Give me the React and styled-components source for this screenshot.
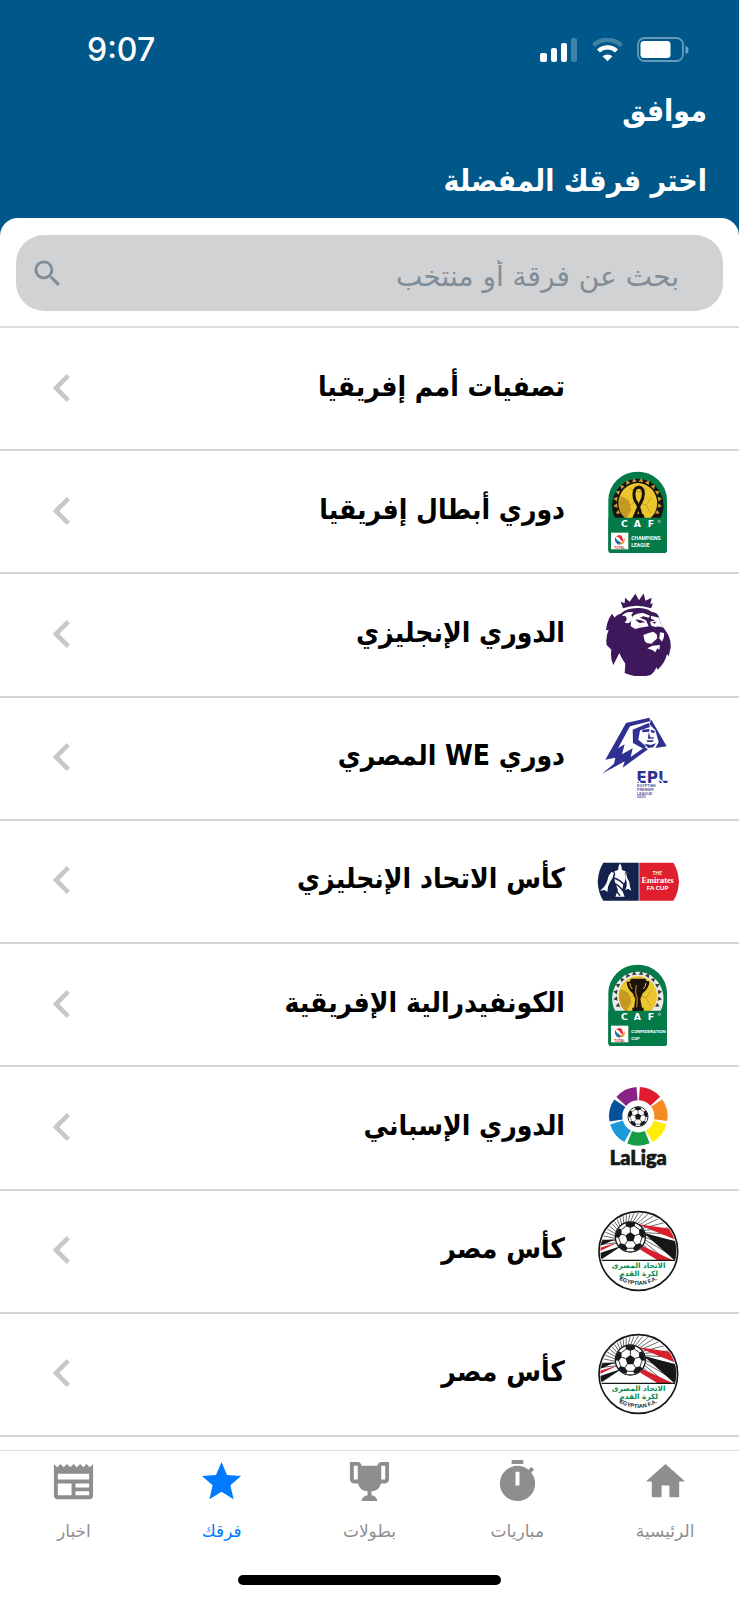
import React from "react";
import styled, { createGlobalStyle } from "styled-components";

const ARABIC = '"DejaVu Sans", "Noto Sans", sans-serif';
const ARABIC_BOLD = '"DejaVu Sans Condensed", "DejaVu Sans", "Noto Sans", sans-serif';
const LATIN = 'Inter, "Liberation Sans", sans-serif';

const GlobalStyle = createGlobalStyle`
  *, *::before, *::after { box-sizing: border-box; }
  body { margin: 0; background: #ffffff; font-family: ${ARABIC}; color: #000000; }
`;

const Screen = styled.div`
  display: flex;
  flex-direction: column;
  min-height: 100vh;
  background: #ffffff;
`;

const Header = styled.header`
  padding-bottom: 18px;
  background: #00578a;
  color: #ffffff;
`;

const StatusBar = styled.div`
  display: flex;
  justify-content: space-between;
  align-items: center;
  direction: ltr;
  height: 88px;
  padding: 12px 50px 0 87px;
`;

const Clock = styled.time`
  font: 500 32px/40px ${LATIN};
`;

const StatusIcons = styled.div`
  display: flex;
  align-items: center;
  gap: 14px;
`;

const HeaderRow = styled.div`
  display: flex;
  align-items: center;
  height: ${(p) => p.$height};
  padding: ${(p) => p.$top || "0"} 32px 0;
`;

const ConfirmButton = styled.button`
  border: 0;
  padding: 0;
  background: none;
  color: inherit;
  font: 700 30px/40px ${ARABIC_BOLD};
  cursor: pointer;
`;

const Title = styled.h1`
  margin: 0;
  font: 700 30px/40px ${ARABIC_BOLD};
`;

const SearchPanel = styled.form`
  padding: 17px 16px 15px;
  margin-top: -18px;
  border-bottom: 2px solid #dcdcde;
  border-radius: 18px 18px 0 0;
  background: #ffffff;
`;

const SearchBox = styled.label`
  display: flex;
  align-items: center;
  height: 76px;
  padding: 0 44px 0 14px;
  border-radius: 28px;
  background: #d0d2d4;
  color: #7f8d98;
`;

const SearchInput = styled.input`
  flex: 1;
  min-width: 0;
  border: 0;
  padding: 8px 0 0;
  outline: 0;
  background: none;
  color: #33414c;
  font: 400 28px/40px ${ARABIC};
  &::placeholder { color: #7f8d98; opacity: 1; }
`;

const List = styled.ul`
  display: flex;
  flex: 1;
  flex-direction: column;
  margin: 0;
  padding: 0 0 13px;
  list-style: none;
`;

const Row = styled.li`
  display: flex;
  flex: 1 0 110px;
  border-bottom: 2px solid #d6d6d8;
`;

const RowButton = styled.button`
  display: flex;
  flex: 1;
  align-items: center;
  gap: 32px;
  border: 0;
  padding: 0 60px 0 34px;
  background: none;
  color: inherit;
  font: 700 28px/40px ${ARABIC_BOLD};
  text-align: right;
  cursor: pointer;
`;

const LogoSlot = styled.span`
  flex: none;
  width: 82px;
  height: 82px;
  direction: ltr;
  svg { display: block; width: 100%; height: 100%; }
`;

const RowLabel = styled.span`
  flex: 1;
  padding-bottom: 4px;
  white-space: nowrap;
`;

const ChevronSlot = styled.span`
  display: flex;
  padding-bottom: 2px;
  color: #c8c8c9;
`;

const TabBar = styled.nav`
  display: flex;
  border-top: 1px solid #dcdcdc;
  padding: 7px 0 32px;
`;

const Tab = styled.a`
  display: flex;
  flex: 1;
  flex-direction: column;
  align-items: center;
  gap: 14px;
  color: ${(p) => (p.$active ? "#007aff" : "#8e8e8f")};
  font: 400 17px/24px ${ARABIC};
  text-decoration: none;
`;

const HomeIndicator = styled.div`
  width: 263px;
  height: 10px;
  margin: 0 auto 15px;
  border-radius: 5px;
  background: #000000;
`;

function Icon({ d, size }) {
  return (
    <svg width={size} height={size} viewBox="0 0 24 24" fill="currentColor" aria-hidden="true">
      <path d={d} />
    </svg>
  );
}

const icons = {
  search:
    "M15.5 14h-.79l-.28-.27A6.47 6.47 0 0 0 16 9.5 6.5 6.5 0 1 0 9.5 16c1.61 0 3.09-.59 4.23-1.57l.27.28v.79l5 4.99L20.49 19l-4.99-5zm-6 0C7.01 14 5 11.99 5 9.5S7.01 5 9.5 5 14 7.01 14 9.5 11.99 14 9.5 14z",
  chevron: "M15.41 7.41 14 6l-6 6 6 6 1.41-1.41L10.83 12z",
  home: "M10 20v-6h4v6h5v-8h3L12 3 2 12h3v8h5z",
  timer:
    "M19.03 7.39l1.42-1.42c-.45-.51-.9-.97-1.41-1.41L17.62 6A8.96 8.96 0 0 0 12 4a9 9 0 0 0-9 9 9 9 0 0 0 9 9c5 0 9-4 9-9 0-2.12-.74-4.07-1.97-5.61M13 14h-2V7h2v7m2-13H9v2h6V1z",
  trophy:
    "M18 2c-.9 0-2 1-2 2H8c0-1-1.1-2-2-2H2v9c0 1 1 2 2 2h2.2c.4 2 1.7 3.7 4.8 4v2.08C8 19.54 8 22 8 22h8s0-2.46-3-2.92V17c3.1-.3 4.4-2 4.8-4H20c1 0 2-1 2-2V2h-4M6 11H4V4h2v7m14 0h-2V4h2v7z",
  star: "M12 17.27 18.18 21l-1.64-7.03L22 9.24l-7.19-.62L12 2 9.19 8.62 2 9.24l5.45 4.73L5.82 21 12 17.27z",
  news:
    "M20 11H4V8h16m0 7h-7v-2h7m0 6h-7v-2h7m-9 2H4v-6h7m9.33-8.33L18.67 3 17 4.67 15.33 3l-1.66 1.67L12 3l-1.67 1.67L8.67 3 7 4.67 5.33 3 3.67 4.67 2 3v16a2 2 0 0 0 2 2h16a2 2 0 0 0 2-2V3l-1.67 1.67z",
};

function Signal() {
  return (
    <svg width="38" height="24" viewBox="0 0 38 24" fill="#fff" aria-hidden="true">
      <rect x="0" y="15" width="7" height="9" rx="2" />
      <rect x="11" y="10" width="6" height="14" rx="2" />
      <rect x="21" y="5" width="6" height="19" rx="2" />
      <rect x="31" y="0" width="6" height="24" rx="2" opacity=".25" />
    </svg>
  );
}

function Wifi() {
  return (
    <svg width="31" height="24" viewBox="0 0 31 24" fill="none" aria-hidden="true">
      <path d="M1.500 7.500a20 20 0 0 1 28 0" stroke="#fff" strokeOpacity=".25" strokeWidth="4.200" />
      <path d="M6.500 13a13 13 0 0 1 18 0" stroke="#fff" strokeWidth="4.200" />
      <path d="M10.500 18.300a7.500 7.500 0 0 1 10 0l-5 5z" fill="#fff" />
    </svg>
  );
}

function Battery() {
  return (
    <svg width="52" height="26" viewBox="0 0 52 26" aria-hidden="true">
      <rect x="1" y="1" width="45" height="23" rx="6.500" fill="none" stroke="#fff" strokeOpacity=".4" strokeWidth="1.800" />
      <path d="M48.500 9v8c2-.6 3-2 3-4s-1-3.400-3-4z" fill="#fff" fillOpacity=".45" />
      <rect x="3.500" y="4" width="30" height="17" rx="3.500" fill="#fff" />
    </svg>
  );
}

function polar(cx, cy, r, deg) {
  const a = (deg * Math.PI) / 180;
  return [cx + r * Math.cos(a), cy + r * Math.sin(a)];
}

function CafEmblem({ top, second, confederation }) {
  const marks = Array.from({ length: 14 }, (_, i) => 153 + i * 18);
  const ring = confederation ? "#e9ecec" : "#17130f";
  const mark = confederation ? "#3a3d36" : "#c99d35";
  return (
    <svg viewBox={`21 ${top} 246 246`} aria-hidden="true">
      <path d="M55 120a88 86 0 0 1 176 0v148q0 10-10 10H65q-10 0-10-10z" fill="#047a49" />
      <path d="M76 174A77 80 0 1 1 211 174Z" fill={ring} />
      {marks.map((deg) => {
        const [x, y] = polar(143, 126, 68, deg);
        return (
          <path key={deg} d="M-7-6 7-6 0 6z" fill={mark} transform={`translate(${x} ${y}) rotate(${deg - 90})`} />
        );
      })}
      <path d="M106 174a58 60 0 1 1 75 0z" fill="#ecc62e" />
      <path d="M106 174a58 60 0 0 1-14-67l24 12 8 28-14 27z" fill="#b98a1d" opacity=".75" />
      <path d="M120 84l23 12 28-10M102 112l16 24-18 22M118 136l20-14 30 12 16-22M168 134l14 24" fill="none" stroke="#b98f22" strokeWidth="2" />
      {confederation ? (
        <g>
          <path d="M123 76h43l4 8h8q0 20-20 36l-7 17 5 26h5v11h-34v-11h5l4-26-8-17q-17-14-18-35h9z" fill="#1c130d" />
          <path d="M119 89q2 12 8 18M168 89q-2 12-8 18" fill="none" stroke="#e6c139" strokeWidth="3" />
          <path d="M139 96q-5 22 3 40l-2 26" fill="none" stroke="#9a752c" strokeWidth="4" />
        </g>
      ) : (
        <g fill="none" stroke="#17100c">
          <path d="M149 81c-20-2-22 30-8 48q12 24 12 44" strokeWidth="9" />
          <path d="M145 81c20-2 18 30 6 48q-12 24-18 44" strokeWidth="9" />
          <path d="M127 173h37l-4-12h-28z" fill="#17100c" stroke="none" />
        </g>
      )}
      <path d="M55 172h176v96q0 10-10 10H65q-10 0-10-10z" fill="#047a49" />
      <g fontFamily="DejaVu Sans" fontWeight="700" fontSize="28" fill="#fff">
        <text x="93" y="199">C</text>
        <text x="131" y="199">A</text>
        <text x="173" y="199">F</text>
      </g>
      <circle cx="208" cy="183" r="3.500" fill="none" stroke="#fff" strokeWidth="1.500" />
      <rect x="63" y="217" width="52" height="50" fill="#fff" />
      <path d="M78 229q8-8 17-3l7 18-10-4q-3-11-14-11z" fill="#e32f35" />
      <path d="M75 229q-3 19 13 25l7-9q-13-1-20-16z" fill="#2768ad" />
      <path d="M104 232q3 15-9 21l-7-6q12-2 16-15z" fill="#f09a2e" />
      <text x="89" y="265" textAnchor="middle" fontFamily="Liberation Sans" fontWeight="700" fontSize="10" fill="#d02a36">
        TOTAL
      </text>
      <g fontFamily="Roboto" fontWeight="700" fontSize={confederation ? 13 : 15} fill="#fff">
        <text x="124" y="240">{confederation ? "CONFEDERATION" : "CHAMPIONS"}</text>
        <text x="124" y="259">{second}</text>
      </g>
    </svg>
  );
}

function PremierLeagueLogo() {
  return (
    <svg viewBox="21 27 246 246" aria-hidden="true">
      <g fill="#3d195b">
        <path d="M99 70 92 50 104 55 105 38 119 50 136 26 147 46 161 25 166 47 185 38 181 57 189 55 183 70Q140 54 99 70z" />
        <path d="M92 86Q108 70 142 69Q168 68 184 80Q204 82 208 98L213 118L226 136Q244 160 242 188L236 214L231 207Q224 236 203 254L199 247Q194 262 180 271Q138 280 104 264L106 236Q94 220 88 204L70 240Q60 220 64 194L50 180Q46 158 56 134L48 136Q50 108 66 86L74 98Q78 90 92 86z" />
      </g>
      <g fill="#fff">
        <path d="M100 88Q112 78 130 82L124 90Q132 98 120 112Q112 118 104 112Q114 104 108 96Q104 90 96 94z" />
        <path d="M128 94Q140 84 160 84L180 92L176 98L160 94L150 98L168 106L176 124Q150 128 136 132L122 124Q122 106 128 94z" />
        <path d="M182 92L208 98L212 116L220 128Q204 122 196 126L184 122L180 110L196 106L184 102z" />
        <path d="M160 150L176 144L190 140L200 148L202 160L184 176L170 174L164 168z" />
        <path d="M210 142L222 144L222 156L216 170L208 160z" />
        <path d="M172 190L188 182L210 180L208 194L202 190L196 202L188 196z" />
      </g>
      <path d="M136 104Q150 102 166 112L148 114zM186 112L200 110L194 116z" fill="#3d195b" />
    </svg>
  );
}

function EgyptianLeagueLogo() {
  return (
    <svg viewBox="21 36 246 246" aria-hidden="true">
      <g fill="#2e3192">
        <path d="M108 54L178 38L182 48L120 64L84 130L104 118L96 148L128 130L122 156L164 127L174 133L98 188L104 169L36 206L72 176L76 158L46 164z" />
        <path d="M184 44L230 124L196 129L206 112L196 76L178 58z" />
        <path d="M128 74L176 54L180 66L150 76L145 104L168 124L160 131L129 114z" />
        <path d="M156 74L178 72L178 80L158 82zM182 74L195 78L192 85L183 82zM176 82L182 98L192 96L190 101L174 101zM170 106L191 106L188 111L172 111zM164 116L182 120L198 115L190 127L174 129z" />
      </g>
      <text x="139" y="235" fontFamily="DejaVu Sans" fontWeight="700" fontSize="46" fill="#2e3192">EPL</text>
      <path d="M139 222l14 14M207 221l14 14" stroke="#fff" strokeWidth="4" />
      <g fontFamily="Liberation Sans" fontSize="11" fill="#55589f">
        <text x="141" y="247">EGYPTIAN</text>
        <text x="141" y="258">PREMIER</text>
        <text x="141" y="269">LEAGUE</text>
        <text x="141" y="280">20/21</text>
      </g>
    </svg>
  );
}

function FaCupLogo() {
  return (
    <svg viewBox="21 -30 246 246" aria-hidden="true">
      <path d="M40 38h106v114H40q-15-22-17-57 2-34 17-57z" fill="#14224d" />
      <path d="M148 38h102q15 23 17 57-2 35-17 57H148z" fill="#df1f2d" />
      <g fill="#fff">
        <path d="M84 60L86 48L90 40L94 48L96 60L107 64L104 72Q110 88 100 104L96 120L104 140H76L84 120L78 104Q70 88 76 72L73 64z" />
        <path d="M64 66L72 68Q70 84 60 96L54 110L52 126L44 120L30 122Q48 108 52 92Q54 76 64 66z" />
        <path d="M116 66L108 68Q110 84 118 96L120 110L124 122L114 116L106 120Q112 108 110 96Q104 84 106 70z" />
      </g>
      <path d="M72 84Q92 90 104 106M72 100Q86 104 98 122M76 122Q84 126 90 138" fill="none" stroke="#14224d" strokeWidth="4" />
      <g fill="#fff" textAnchor="middle">
        <text x="202" y="75" fontFamily="Lato" fontWeight="700" fontSize="14">THE</text>
        <text x="203" y="98" fontFamily="Liberation Serif" fontWeight="700" fontSize="25">Emirates</text>
        <text x="203" y="119" fontFamily="Lato" fontWeight="900" fontSize="19">FA CUP</text>
      </g>
    </svg>
  );
}

function Football({ cx, cy, r }) {
  const angles = [-90, -18, 54, 126, 198];
  const point = (radius, deg) => polar(cx, cy, radius * r, deg).join(" ");
  return (
    <g>
      <circle cx={cx} cy={cy} r={r} fill="#fff" stroke="#15191b" strokeWidth={r * 0.09} />
      <path d={`M${angles.map((a) => point(0.34, a)).join("L")}Z`} fill="#15191b" />
      {angles.map((a) => (
        <g key={a}>
          <path d={`M${point(0.34, a)}L${point(0.66, a)}M${point(0.77, a + 23)}L${point(0.77, a + 49)}`} stroke="#15191b" strokeWidth={r * 0.06} fill="none" />
          <path d={`M${point(0.62, a)}L${point(0.77, a - 23)}L${point(0.98, a - 19)}L${point(0.99, a)}L${point(0.98, a + 19)}L${point(0.77, a + 23)}Z`} fill="#15191b" />
        </g>
      ))}
    </g>
  );
}

function LaLigaLogo() {
  const colors = ["#df1b2d", "#f48a20", "#ffed09", "#169b48", "#1a9ad8", "#07519b", "#8a2388"];
  return (
    <svg viewBox="21 36 246 246" aria-hidden="true">
      {colors.map((color, i) => {
        const start = -87 + i * 51.4;
        const end = start + 45;
        const [x1, y1] = polar(145, 124, 88, start);
        const [x2, y2] = polar(145, 124, 88, end);
        const [x3, y3] = polar(145, 124, 48, end + 1);
        const [x4, y4] = polar(145, 124, 48, start - 1);
        return <path key={color} d={`M${x1} ${y1}A88 88 0 0 1 ${x2} ${y2}L${x3} ${y3}A48 48 0 0 0 ${x4} ${y4}Z`} fill={color} />;
      })}
      <Football cx={144} cy={125} r={30} />
      <text x="145" y="271" textAnchor="middle" fontFamily="Lato" fontWeight="900" fontSize="60" fill="#151817" stroke="#151817" strokeWidth="2">
        LaLiga
      </text>
    </svg>
  );
}

function EgyptianFaLogo({ id }) {
  const rays = Array.from({ length: 27 }, (_, i) => 150 + i * 9);
  return (
    <svg viewBox="21 30 246 246" aria-hidden="true">
      <defs>
        <clipPath id={`${id}-disc`}>
          <circle cx="145" cy="153" r="114" />
        </clipPath>
        <path id={`${id}-arc`} d="M41 176a108 108 0 0 0 208 0" />
      </defs>
      <circle cx="145" cy="153" r="118" fill="#fff" stroke="#161616" strokeWidth="5" />
      <g clipPath={`url(#${id}-disc)`}>
        {rays.map((deg) => {
          const [x, y] = polar(120, 110, 35, deg);
          const [fx, fy] = polar(120, 110, 200, deg + 20);
          return <path key={deg} d={`M${x} ${y}L${fx} ${fy}`} stroke="#222" strokeWidth="2" />;
        })}
        <path d="M140 72 280 92v36z" fill="#d7202b" />
        <path d="M160 98 280 130v60l-25-8z" fill="#161616" />
        <path d="M156 137 260 186h-48l-61-37z" fill="#d7202b" />
        <path d="M20 122l57-4-57 24zM20 162l76-25-60 40z" fill="#161616" />
        <path d="M22 146l63-19-61 29z" fill="#d7202b" />
        <path d="M20 181h250v100H20z" fill="#fff" />
        <path d="M26 181h240" stroke="#161616" strokeWidth="4" />
      </g>
      <Football cx={121} cy={111} r={45} />
      <g fontFamily="DejaVu Sans" fontWeight="700" fill="#0a8c4e" textAnchor="middle" direction="rtl">
        <text x="146" y="205" fontSize="22">الاتحاد المصرى</text>
        <text x="146" y="228" fontSize="22">لكرة القدم</text>
      </g>
      <text fontFamily="Liberation Sans" fontWeight="700" fontSize="17" fill="#222" textAnchor="middle">
        <textPath href={`#${id}-arc`} startOffset="50%">EGYPTIAN F.A.</textPath>
      </text>
    </svg>
  );
}

const competitions = [
  { name: "تصفيات أمم إفريقيا" },
  { name: "دوري أبطال إفريقيا", logo: <CafEmblem top={32} second="LEAGUE" /> },
  { name: "الدوري الإنجليزي", logo: <PremierLeagueLogo /> },
  { name: "دوري WE المصري", logo: <EgyptianLeagueLogo /> },
  { name: "كأس الاتحاد الإنجليزي", logo: <FaCupLogo /> },
  { name: "الكونفيدرالية الإفريقية", logo: <CafEmblem top={32} second="CUP" confederation /> },
  { name: "الدوري الإسباني", logo: <LaLigaLogo /> },
  { name: "كأس مصر", logo: <EgyptianFaLogo id="efa-a" /> },
  { name: "كأس مصر", logo: <EgyptianFaLogo id="efa-b" /> },
];

const tabs = [
  { label: "الرئيسية", icon: icons.home },
  { label: "مباريات", icon: icons.timer },
  { label: "بطولات", icon: icons.trophy },
  { label: "فرقك", icon: icons.star, active: true },
  { label: "اخبار", icon: icons.news },
];

export default function App() {
  return (
    <Screen dir="rtl" lang="ar">
      <GlobalStyle />
      <Header>
        <StatusBar>
          <Clock>9:07</Clock>
          <StatusIcons>
            <Signal />
            <Wifi />
            <Battery />
          </StatusIcons>
        </StatusBar>
        <HeaderRow $height="46px">
          <ConfirmButton type="button">موافق</ConfirmButton>
        </HeaderRow>
        <HeaderRow $height="84px" $top="10px">
          <Title>اختر فرقك المفضلة</Title>
        </HeaderRow>
      </Header>
      <SearchPanel role="search">
        <SearchBox>
          <SearchInput type="text" aria-label="بحث" placeholder="بحث عن فرقة أو منتخب" />
          <Icon d={icons.search} size={35} />
        </SearchBox>
      </SearchPanel>
      <List>
        {competitions.map((item, i) => (
          <Row key={i}>
            <RowButton type="button">
              <LogoSlot>{item.logo}</LogoSlot>
              <RowLabel>{item.name}</RowLabel>
              <ChevronSlot>
                <Icon d={icons.chevron} size={56} />
              </ChevronSlot>
            </RowButton>
          </Row>
        ))}
      </List>
      <TabBar>
        {tabs.map((tab) => (
          <Tab key={tab.label} href="#" $active={tab.active} aria-current={tab.active ? "page" : undefined}>
            <Icon d={tab.icon} size={47} />
            {tab.label}
          </Tab>
        ))}
      </TabBar>
      <HomeIndicator />
    </Screen>
  );
}
